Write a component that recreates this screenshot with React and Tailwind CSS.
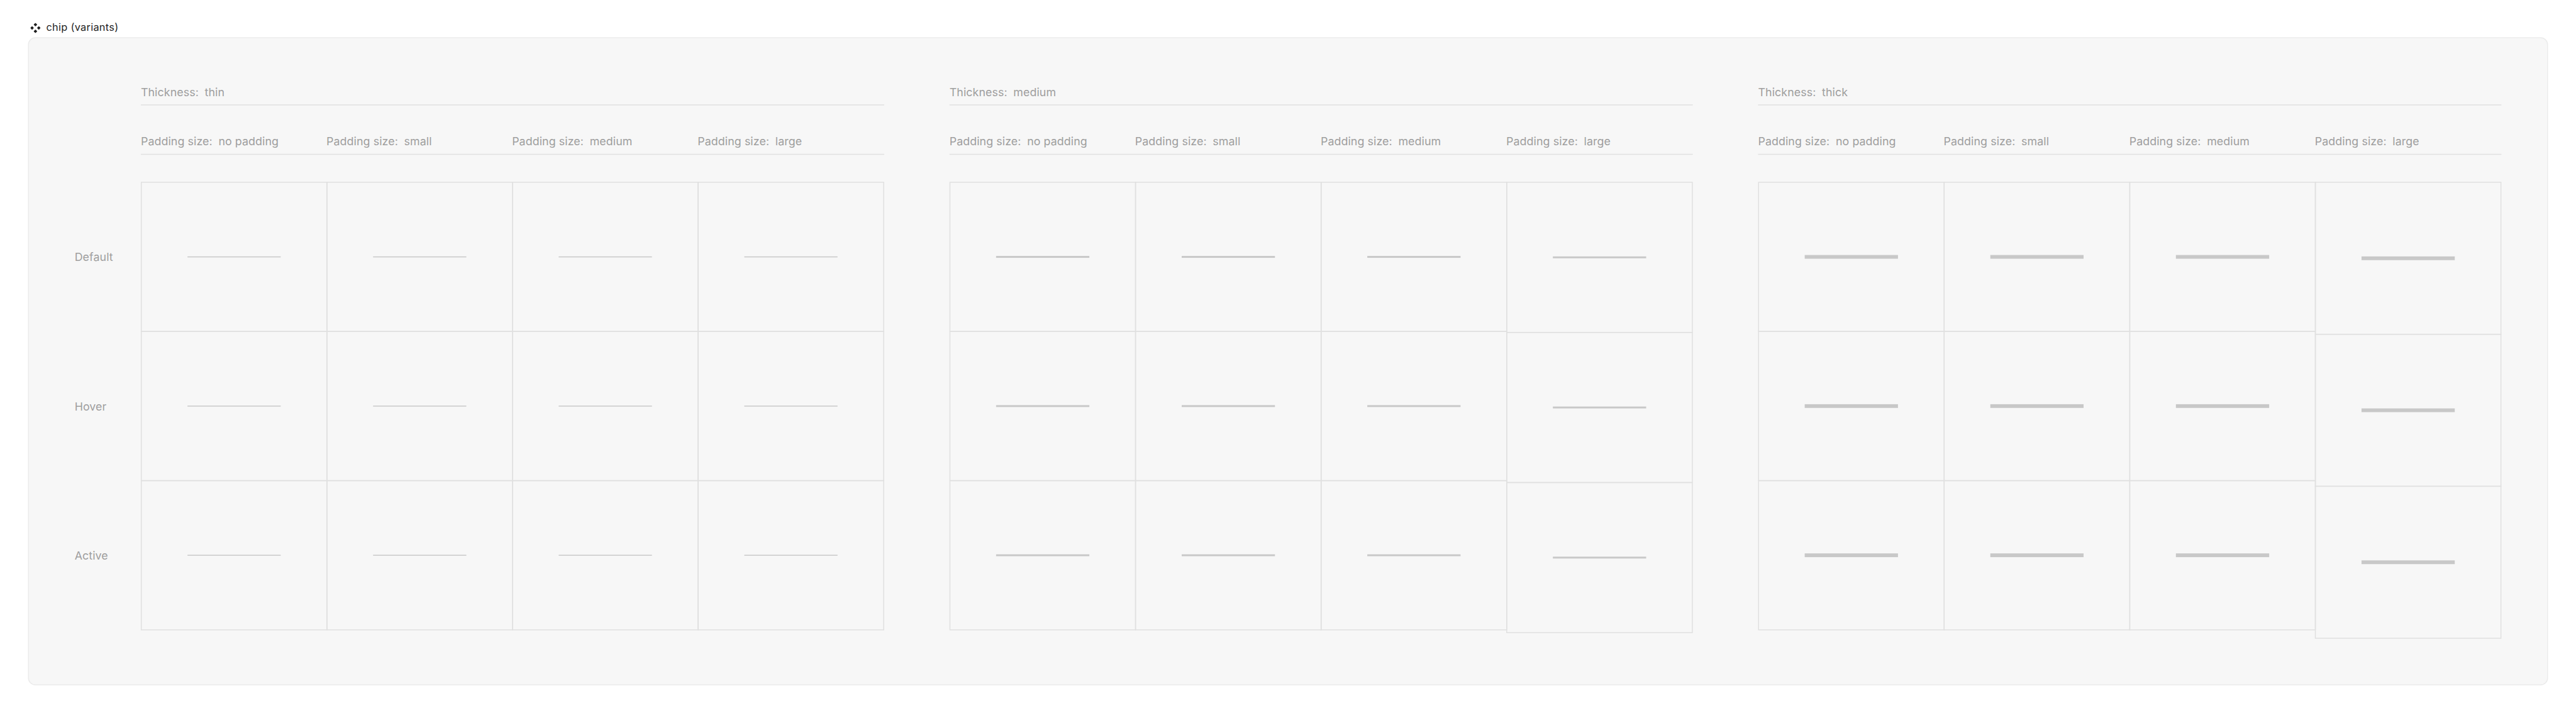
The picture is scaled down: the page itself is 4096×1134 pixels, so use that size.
const GROUPS = [
  { name: "thin", bar: "h-[2px]", largeCell: "h-[322px]" },
  { name: "medium", bar: "h-[4px]", largeCell: "h-[324px]" },
  { name: "thick", bar: "h-[8px]", largeCell: "h-[328px]" },
];

const PADDINGS = ["no padding", "small", "medium", "large"];
const STATES = ["Default", "Hover", "Active"];

function VariantIcon() {
  return (
    <svg viewBox="0 0 22 22" className="h-[22px] w-[22px] shrink-0 fill-[#1e1e1e] stroke-[#1e1e1e]" strokeWidth="1.4" strokeLinejoin="round">
      <path d="M11 .9 13.9 3.8 11 6.7 8.1 3.8ZM11 15.3 13.9 18.2 11 21.1 8.1 18.2ZM3.8 8.1 6.7 11 3.8 13.9.9 11ZM18.2 8.1 21.1 11 18.2 13.9 15.3 11Z" />
    </svg>
  );
}

function Label({ name, value }) {
  return (
    <div className="flex h-[39px] items-start gap-[13px] pt-px leading-6 whitespace-nowrap">
      <span>{name}</span>
      <span>{value}</span>
    </div>
  );
}

function Column({ group, padding }) {
  const cell = padding === "large" ? group.largeCell : "h-[322px]";
  return (
    <div className="-mr-[2px] w-[400px] shrink-0">
      {STATES.map((state) => (
        <div
          key={state}
          className={`-mb-[2px] flex items-center justify-center border-2 border-[#e0e0e0] ${cell}`}
        >
          <div className={`w-[200px] bg-[#c8c8c8] ${group.bar}`} />
        </div>
      ))}
    </div>
  );
}

function Group({ group }) {
  return (
    <section className="w-[1594px] shrink-0">
      <div className="border-b-2 border-[#e0e0e0]">
        <Label name="Thickness:" value={group.name} />
      </div>
      <div className="mt-[65px] flex border-b-2 border-[#e0e0e0]">
        {PADDINGS.map((padding) => (
          <div key={padding} className="w-[398px] shrink-0 last:w-[400px]">
            <Label name="Padding size:" value={padding} />
          </div>
        ))}
      </div>
      <div className="mt-[58px] flex items-start">
        {PADDINGS.map((padding) => (
          <Column key={padding} group={group} padding={padding} />
        ))}
      </div>
    </section>
  );
}

export default function App() {
  return (
    <div className="h-[1134px] w-[4096px] overflow-hidden bg-white font-[family-name:Inter,sans-serif]">
      <main className="h-[1530px] w-[5524px] origin-top-left scale-[0.7415] px-[60px]">
        <header className="flex h-20 items-start gap-3 pl-[5px]">
          <div className="pt-[49px]">
            <VariantIcon />
          </div>
          <h1 className="pt-[46px] text-[22px] leading-6 tracking-[0.4px] text-[#1e1e1e]">chip (variants)</h1>
        </header>
        <div className="flex h-[1390px] rounded-2xl border-2 border-[#ebebeb] bg-[#f7f7f7] pt-[103px] text-2xl tracking-[0.12px] text-[#9e9e9e]">
          <div className="w-60 shrink-0 pt-[207px] pl-[98px]">
            {STATES.map((state) => (
              <div key={state} className="flex h-80 items-center leading-6">
                {state}
              </div>
            ))}
          </div>
          <div className="flex gap-[140px]">
            {GROUPS.map((group) => (
              <Group key={group.name} group={group} />
            ))}
          </div>
        </div>
      </main>
    </div>
  );
}
